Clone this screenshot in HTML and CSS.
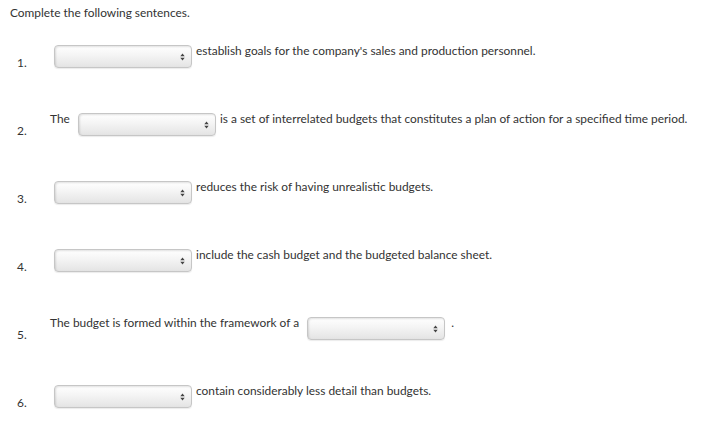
FILE: index.html
```html
<!DOCTYPE html>
<html>
<head>
<meta charset="utf-8">
<link rel="stylesheet" href="styles.css">
</head>
<body>
<div class="page">
  <p class="title">Complete the following sentences.</p>
  <ol class="questions">
    <li class="q">
      <span class="num">1.</span>
      <span class="body"><span class="sel first"><svg class="arr" width="5" height="8" viewBox="0 0 5 8"><path d="M2.5 0.5 L4.7 3.2 L0.3 3.2 Z M2.5 7.5 L4.7 4.8 L0.3 4.8 Z"/></svg></span> establish goals for the company's sales and production personnel.</span>
    </li>
    <li class="q">
      <span class="num">2.</span>
      <span class="body">The <span class="sel"><svg class="arr" width="5" height="8" viewBox="0 0 5 8"><path d="M2.5 0.5 L4.7 3.2 L0.3 3.2 Z M2.5 7.5 L4.7 4.8 L0.3 4.8 Z"/></svg></span> is a set of interrelated budgets that constitutes a plan of action for a specified time period.</span>
    </li>
    <li class="q">
      <span class="num">3.</span>
      <span class="body"><span class="sel first"><svg class="arr" width="5" height="8" viewBox="0 0 5 8"><path d="M2.5 0.5 L4.7 3.2 L0.3 3.2 Z M2.5 7.5 L4.7 4.8 L0.3 4.8 Z"/></svg></span> reduces the risk of having unrealistic budgets.</span>
    </li>
    <li class="q">
      <span class="num">4.</span>
      <span class="body"><span class="sel first"><svg class="arr" width="5" height="8" viewBox="0 0 5 8"><path d="M2.5 0.5 L4.7 3.2 L0.3 3.2 Z M2.5 7.5 L4.7 4.8 L0.3 4.8 Z"/></svg></span> include the cash budget and the budgeted balance sheet.</span>
    </li>
    <li class="q">
      <span class="num">5.</span>
      <span class="body">The budget is formed within the framework of a <span class="sel"><svg class="arr" width="5" height="8" viewBox="0 0 5 8"><path d="M2.5 0.5 L4.7 3.2 L0.3 3.2 Z M2.5 7.5 L4.7 4.8 L0.3 4.8 Z"/></svg></span><span class="dot">.</span></span>
    </li>
    <li class="q last">
      <span class="num">6.</span>
      <span class="body"><span class="sel first"><svg class="arr" width="5" height="8" viewBox="0 0 5 8"><path d="M2.5 0.5 L4.7 3.2 L0.3 3.2 Z M2.5 7.5 L4.7 4.8 L0.3 4.8 Z"/></svg></span> contain considerably less detail than budgets.</span>
    </li>
  </ol>
</div>
</body>
</html>
```

FILE: styles.css
```css
html, body {
  margin: 0;
  padding: 0;
  background: #ffffff;
}

.page {
  font-family: Lato, "Liberation Sans", sans-serif;
  font-size: 11.9px;
  line-height: 12px;
  color: #333333;
  padding: 7px 0 0 10px;
}

.title {
  margin: 0 0 26px 0;
}

.questions {
  list-style: none;
  margin: 0;
  padding: 0;
}

.q {
  display: flex;
  height: 68px;
}

.q.last {
  height: 40px;
}

.num {
  flex: 0 0 auto;
  width: 40px;
  padding: 12px 0 0 7px;
  box-sizing: border-box;
}

.body {
  flex: 1 1 auto;
  white-space: nowrap;
}

.sel {
  display: inline-block;
  vertical-align: top;
  position: relative;
  width: 138px;
  height: 23px;
  box-sizing: border-box;
  margin: 0 1px 0 5px;
  border: 1px solid #c6c6c6;
  border-radius: 4px;
  background: linear-gradient(to bottom, #ffffff 0%, #f4f4f4 45%, #e4e4e4 100%);
  box-shadow: inset 1px 1px 2px rgba(0, 0, 0, 0.12), 0 1px 1px rgba(0, 0, 0, 0.08);
}

.sel.first {
  margin-left: 4px;
}

.arr {
  position: absolute;
  right: 6px;
  top: 7px;
  fill: #444444;
}

.dot {
  margin-left: 5px;
}
```
